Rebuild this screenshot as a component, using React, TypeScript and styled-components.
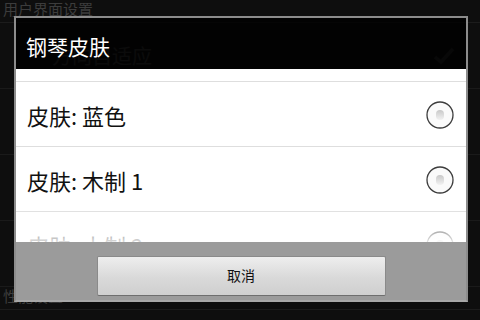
import React from 'react';
import styled, {createGlobalStyle} from 'styled-components';

const GlobalStyle = createGlobalStyle`
  html, body {
    margin: 0;
    padding: 0;
    background: #0c0c0c;
  }
  body {
    font-family: "Noto Sans CJK SC", "Noto Sans", sans-serif;
  }
`;

const skins = ['皮肤: 默认', '皮肤: 蓝色', '皮肤: 木制 1', '皮肤: 木制 2'];

const Screen = styled.div`
  position: relative;
  width: 480px;
  height: 320px;
  overflow: hidden;
  background: #0e0e0e;
`;

const SectionHeader = styled.div`
  height: 22px;
  padding-left: 3px;
  font-size: 15px;
  line-height: 18px;
  color: #3c3c3c;
  border-bottom: 1px solid #1c1c1c;
`;

const PrefRow = styled.div`
  height: 65px;
  display: flex;
  align-items: center;
  justify-content: space-between;
  padding: 0 24px 0 52px;
  font-size: 20px;
  color: #3a3a3a;
  border-bottom: 1px solid #1a1a1a;
`;

const Dialog = styled.div`
  position: absolute;
  left: 14px;
  top: 16px;
  width: 450px;
  height: 282px;
  border: 2px solid #8c8c8c;
  border-bottom-color: #a8a8a8;
  display: flex;
  flex-direction: column;
`;

const Title = styled.div`
  height: 51px;
  flex: none;
  display: flex;
  align-items: center;
  padding: 4px 0 0 10px;
  box-sizing: border-box;
  font-size: 21px;
  color: #ffffff;
  background: rgba(0, 0, 0, 0.8);
`;

const List = styled.div`
  position: relative;
  height: 173px;
  flex: none;
  overflow: hidden;
  background: #ffffff;
`;

const ListInner = styled.div`
  margin-top: -52px;
`;

const Row = styled.div`
  height: 65px;
  box-sizing: border-box;
  display: flex;
  align-items: center;
  justify-content: space-between;
  padding: 2px 11px 0 11px;
  border-bottom: 1px solid #dedede;
  font-size: 22px;
  color: #111111;
`;

const Fade = styled.div`
  position: absolute;
  left: 0;
  right: 0;
  bottom: 0;
  height: 34px;
  background: linear-gradient(rgba(255, 255, 255, 0), rgba(255, 255, 255, 0.85));
  pointer-events: none;
`;

const ButtonBar = styled.div`
  flex: 1;
  background: #9b9b9b;
  display: flex;
  justify-content: center;
  padding-top: 14px;
`;

const Button = styled.div`
  width: 289px;
  height: 38px;
  border: 1px solid #8a8a8a;
  border-bottom-color: #6e6e6e;
  border-radius: 2px;
  background: linear-gradient(#eeeeee, #d9d9d9 55%, #cfcfcf);
  display: flex;
  align-items: center;
  justify-content: center;
  padding-bottom: 2px;
  box-sizing: border-box;
  height: 40px;
  font-size: 14px;
  color: #111111;
`;

const Radio = () => (
  <svg width="30" height="30" viewBox="0 0 30 30">
    <defs>
      <linearGradient id="dot" x1="0" y1="0" x2="0" y2="1">
        <stop offset="0" stopColor="#c8c8c8" />
        <stop offset="1" stopColor="#f2f2f2" />
      </linearGradient>
    </defs>
    <circle cx="15" cy="15" r="13" fill="#fafafa" stroke="#3c3c3c" strokeWidth="1.3" />
    <rect x="11" y="10" width="8" height="10" rx="4" fill="url(#dot)" />
  </svg>
);

const Check = () => (
  <svg width="24" height="20" viewBox="0 0 24 20">
    <path d="M3 11 L9 16 L21 3" fill="none" stroke="#2a2a2a" strokeWidth="3.5" />
  </svg>
);

export default function App() {
  return (
    <>
      <GlobalStyle />
      <Screen>
        <SectionHeader>用户界面设置</SectionHeader>
        <PrefRow>
          <span>方向自适应</span>
          <Check />
        </PrefRow>
        <PrefRow />
        <PrefRow />
        <PrefRow />
        <SectionHeader>性能设置</SectionHeader>
        <Dialog>
          <Title>钢琴皮肤</Title>
          <List>
            <ListInner>
              {skins.map((s) => (
                <Row key={s}>
                  <span>{s}</span>
                  <Radio />
                </Row>
              ))}
            </ListInner>
            <Fade />
          </List>
          <ButtonBar>
            <Button>取消</Button>
          </ButtonBar>
        </Dialog>
      </Screen>
    </>
  );
}
